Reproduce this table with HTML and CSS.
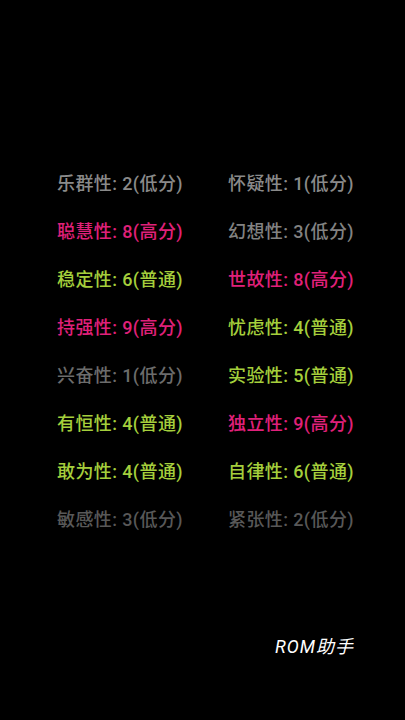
FILE: index.html
```html
<!DOCTYPE html>
<html lang="zh">
<head>
<meta charset="utf-8">
<link rel="stylesheet" href="styles.css">
</head>
<body>
<div class="screen">
  <div class="grid">
    <div class="cell low g1">乐群性: 2(低分)</div>
    <div class="cell low g1">怀疑性: 1(低分)</div>
    <div class="cell high">聪慧性: 8(高分)</div>
    <div class="cell low g2">幻想性: 3(低分)</div>
    <div class="cell mid">稳定性: 6(普通)</div>
    <div class="cell high">世故性: 8(高分)</div>
    <div class="cell high">持强性: 9(高分)</div>
    <div class="cell mid">忧虑性: 4(普通)</div>
    <div class="cell low g5">兴奋性: 1(低分)</div>
    <div class="cell mid">实验性: 5(普通)</div>
    <div class="cell mid">有恒性: 4(普通)</div>
    <div class="cell high">独立性: 9(高分)</div>
    <div class="cell mid">敢为性: 4(普通)</div>
    <div class="cell mid">自律性: 6(普通)</div>
    <div class="cell low g8">敏感性: 3(低分)</div>
    <div class="cell low g8">紧张性: 2(低分)</div>
  </div>
  <div class="footer">ROM助手</div>
</div>
</body>
</html>
```
FILE: styles.css
```css
html, body {
  margin: 0;
  padding: 0;
  background: #000;
}
.screen {
  width: 405px;
  height: 720px;
  background: #000;
  display: flex;
  flex-direction: column;
  font-family: Roboto, "Noto Sans CJK SC", sans-serif;
}
.grid {
  display: grid;
  grid-template-columns: 171px 171px;
  grid-auto-rows: 48px;
  padding: 160px 0 0 57px;
}
.cell {
  font-size: 18px;
  font-weight: 500;
  line-height: 48px;
  white-space: nowrap;
  letter-spacing: 0.4px;
}
.high { color: #e0207a; }
.mid { color: #a5cf3c; }
.g1 { color: #8a8a8a; }
.g2 { color: #828282; }
.g5 { color: #6c6c6c; }
.g8 { color: #585858; }
.footer {
  margin-top: auto;
  margin-bottom: 62px;
  align-self: flex-end;
  margin-right: 51px;
  color: #fff;
  font-size: 18px;
  font-style: italic;
  font-weight: 400;
  letter-spacing: 1px;
}
```
